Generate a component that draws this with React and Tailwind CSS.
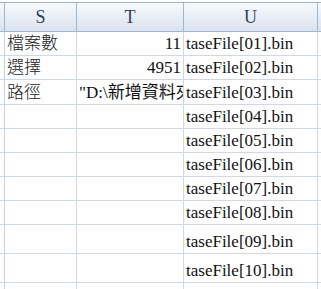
import React from 'react';

const serif = { fontFamily: '"Liberation Serif", "Noto Sans CJK TC", serif' };

const rows = [
  { h: 'h-[24px]', s: '檔案數', t: '11', u: 'taseFile[01].bin' },
  { h: 'h-[24px]', s: '選擇', t: '4951', u: 'taseFile[02].bin' },
  { h: 'h-[25px]', s: '路徑', t: '"D:\\新增資料夾', left: true, u: 'taseFile[03].bin' },
  { h: 'h-[24px]', u: 'taseFile[04].bin' },
  { h: 'h-[24px]', u: 'taseFile[05].bin' },
  { h: 'h-[24px]', u: 'taseFile[06].bin' },
  { h: 'h-[24px]', u: 'taseFile[07].bin' },
  { h: 'h-[24px]', u: 'taseFile[08].bin' },
  { h: 'h-[29px]', u: 'taseFile[09].bin' },
  { h: 'h-[29px]', u: 'taseFile[10].bin' },
  { h: 'h-[24px]' },
];

const Cell = ({ w, children, align = 'left' }) => (
  <div
    className={`${w} h-full shrink-0 flex items-end overflow-hidden whitespace-nowrap pb-[1px] border-r border-[#d0d7e5] ${
      align === 'right' ? 'justify-end pr-[2px]' : 'pl-[2px]'
    }`}
  >
    {children}
  </div>
);

export default function App() {
  return (
    <div className="w-[321px] h-[289px] bg-white overflow-hidden text-[17px] leading-[20px] text-[#111]" style={serif}>
      <div className="h-[2px]" />
      <div className="flex h-[30px] border-y border-[#9eb6ce] bg-gradient-to-b from-[#f7f9fc] to-[#dbe3ee] text-[#2a4159] text-[18px]">
        <div className="w-[5px] shrink-0 border-r border-[#9eb6ce]" />
        <div className="w-[72px] shrink-0 border-r border-[#9eb6ce] flex items-center justify-center">S</div>
        <div className="w-[107px] shrink-0 border-r border-[#9eb6ce] flex items-center justify-center">T</div>
        <div className="w-[134px] shrink-0 border-r border-[#9eb6ce] flex items-center justify-center">U</div>
        <div className="flex-1" />
      </div>
      {rows.map((r, i) => (
        <div key={i} className={`flex ${r.h} border-b border-[#d0d7e5]`}>
          <div className="w-[5px] shrink-0 border-r border-[#c5d2e3] bg-white" />
          <Cell w="w-[72px]">
            <span className="font-light text-[#222]">{r.s}</span>
          </Cell>
          <Cell w="w-[107px]" align={r.left ? 'left' : 'right'}>{r.t}</Cell>
          <Cell w="w-[134px]">{r.u}</Cell>
          <div className="flex-1" />
        </div>
      ))}
    </div>
  );
}
